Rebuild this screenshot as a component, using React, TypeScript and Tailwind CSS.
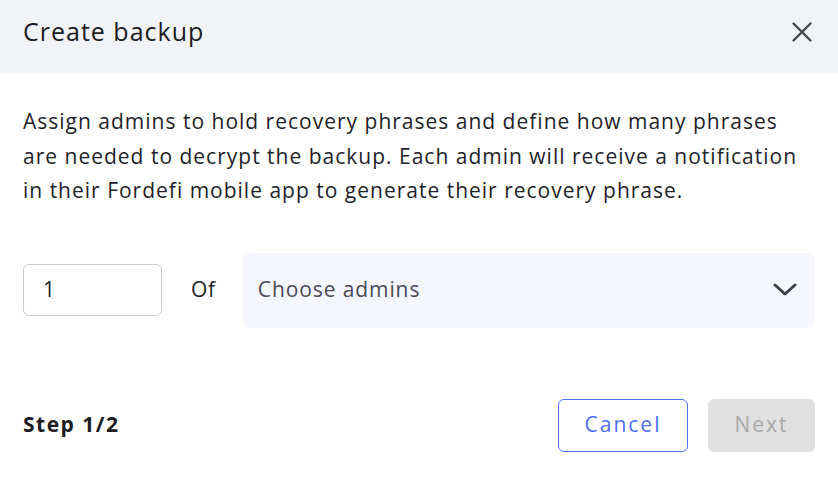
export default function App() {
  return (
    <div className="w-[838px] h-[480px] bg-white font-['Open_Sans',sans-serif] text-[#1f1f29]">
      <div className="h-[73px] bg-[#f2f3f7] pl-[23px] pr-[24px] pb-[9px] flex items-center justify-between">
        <h1 className="text-[25px] tracking-[1px] text-[#1b1b22]">Create backup</h1>
        <svg width="24" height="24" viewBox="0 0 24 24" fill="none" stroke="#454552" strokeWidth="2.4" strokeLinecap="round">
          <path d="M3.5 3.5l17 17M20.5 3.5l-17 17" />
        </svg>
      </div>
      <div className="px-[23px] pt-[31px]">
        <p className="text-[21px] leading-[34.5px] tracking-[1px] whitespace-nowrap">
          Assign admins to hold recovery phrases and define how many phrases
          <br />
          are needed to decrypt the backup. Each admin will receive a notification
          <br />
          in their Fordefi mobile app to generate their recovery phrase.
        </p>
        <div className="mt-[45px] flex items-center">
          <div className="w-[139px] h-[52px] border border-[#c9c9d2] rounded-[6px] flex items-center pl-[19px] text-[21px]">1</div>
          <span className="ml-[29px] text-[21px] tracking-[0.7px]">Of</span>
          <div className="ml-[27px] flex-1 h-[75px] bg-[#f6f6fe] rounded-[8px] flex items-center justify-between pl-[15px] pr-[18px]">
            <span className="text-[21px] tracking-[0.9px] text-[#4a4a57]">Choose admins</span>
            <svg width="24" height="14" viewBox="0 0 24 14" fill="none" stroke="#3f3f4b" strokeWidth="3" strokeLinecap="round" strokeLinejoin="round">
              <path d="M2 2l10 9 10-9" />
            </svg>
          </div>
        </div>
        <div className="mt-[71px] flex items-center justify-between">
          <span className="text-[21px] font-bold tracking-[1.5px] text-[#1b1b22]">Step 1/2</span>
          <div className="flex gap-[20px]">
            <button className="w-[130px] h-[53px] border-[1.5px] border-[#4f6ef7] rounded-[6px] text-[21px] tracking-[2px] text-[#4f6ef7]">Cancel</button>
            <button className="w-[107px] h-[53px] bg-[#e0e0e0] rounded-[6px] text-[21px] tracking-[2px] text-[#a9a9a9]">Next</button>
          </div>
        </div>
      </div>
    </div>
  )
}
